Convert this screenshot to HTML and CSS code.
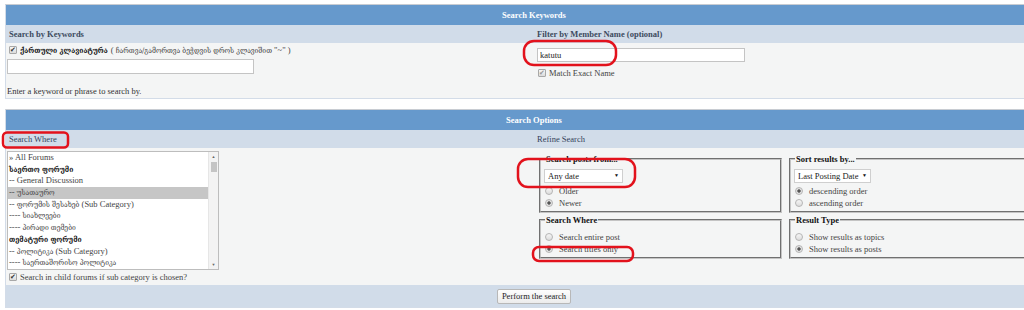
FILE: index.html
```html
<!DOCTYPE html>
<html lang="ka">
<head>
  <meta charset="UTF-8">
  <meta name="viewport" content="width=device-width, initial-scale=1.0">
  <title>Search</title>
  <link rel="stylesheet" href="styles.css">
</head>
<body>
  <div class="shot">
    <div class="page">

      <form class="panel">
        <div class="panel-head">Search Keywords</div>
        <div class="cols sub">
          <div class="cell">Search by Keywords</div>
          <div class="cell">Filter by Member Name (optional)</div>
        </div>
        <div class="cols body-top">
          <div class="cell cell-keywords">
            <label class="check-line kb-line">
              <input type="checkbox" checked>
              <b class="ka">ქართული კლავიატურა</b>
              <span class="kb-note">( <span class="ka">ჩართვა/გამორთვა ბეჭდვის დროს კლავიშით</span> "~" )</span>
            </label>
            <input type="text" class="text-input keywords">
            <div class="hint">Enter a keyword or phrase to search by.</div>
          </div>
          <div class="cell cell-member">
            <input type="text" class="text-input member" value="katutu">
            <label class="check-line exact">
              <input type="checkbox" checked disabled>
              Match Exact Name
            </label>
          </div>
        </div>
      </form>

      <form class="panel panel-options">
        <div class="panel-head">Search Options</div>
        <div class="cols sub sub-light">
          <div class="cell">Search Where</div>
          <div class="cell">Refine Search</div>
        </div>
        <div class="cols body-options">
          <div class="cell cell-forums">
            <div class="listbox">
              <ul class="forum-list">
                <li>» All Forums</li>
                <li class="cat"><span class="ka">საერთო ფორუმი</span></li>
                <li>-- General Discussion</li>
                <li class="selected">-- <span class="ka">უსათაურო</span></li>
                <li>-- <span class="ka">ფორუმის შესახებ</span> (Sub Category)</li>
                <li>---- <span class="ka">სიახლეები</span></li>
                <li>---- <span class="ka">პირადი თემები</span></li>
                <li class="cat"><span class="ka">თემატური ფორუმი</span></li>
                <li>-- <span class="ka">პოლიტიკა</span> (Sub Category)</li>
                <li>---- <span class="ka">საერთაშორისო პოლიტიკა</span></li>
              </ul>
              <div class="scrollbar">
                <span class="arrow">▲</span>
                <span class="thumb"></span>
                <span class="track"></span>
                <span class="arrow">▼</span>
              </div>
            </div>
            <label class="check-line child">
              <input type="checkbox" checked>
              Search in child forums if sub category is chosen?
            </label>
          </div>

          <div class="cell cell-refine">
            <div class="refine-grid">
              <fieldset>
                <legend>Search posts from...</legend>
                <span class="select select-date">
                  <select>
                    <option>Any date</option>
                  </select>
                </span>
                <label class="radio-line"><input type="radio" name="age">Older</label>
                <label class="radio-line"><input type="radio" name="age" checked>Newer</label>
              </fieldset>
              <fieldset>
                <legend>Sort results by...</legend>
                <span class="select select-sort">
                  <select>
                    <option>Last Posting Date</option>
                  </select>
                </span>
                <label class="radio-line"><input type="radio" name="order" checked>descending order</label>
                <label class="radio-line"><input type="radio" name="order">ascending order</label>
              </fieldset>
              <fieldset class="fs-low">
                <legend>Search Where</legend>
                <label class="radio-line"><input type="radio" name="where">Search entire post</label>
                <label class="radio-line"><input type="radio" name="where" checked>Search titles only</label>
              </fieldset>
              <fieldset class="fs-low">
                <legend>Result Type</legend>
                <label class="radio-line"><input type="radio" name="type">Show results as topics</label>
                <label class="radio-line"><input type="radio" name="type" checked>Show results as posts</label>
              </fieldset>
            </div>
          </div>
        </div>
        <div class="panel-foot">
          <button type="submit">Perform the search</button>
        </div>
      </form>

    </div>

    <!-- red marker circles drawn over the screenshot -->
    <svg class="marks" width="1024" height="310" viewBox="0 0 1024 310">
      <rect x="524" y="41" width="92" height="24" rx="10"/>
      <rect x="3" y="132.5" width="65" height="15" rx="4"/>
      <rect x="518" y="159" width="117" height="28" rx="10"/>
      <rect x="533" y="247" width="100" height="14" rx="6"/>
    </svg>
  </div>
</body>
</html>
```

FILE: styles.css
```css
body {
  margin: 0;
  overflow: hidden;
  background: #fff;
  font-family: "Liberation Serif", "DejaVu Serif", serif;
  font-size: 8.5px;
  color: #333;
}
.shot {
  position: relative;
  width: 1024px;
  height: 310px;
  overflow: hidden;
}
.page {
  width: 1058px;
  margin-left: 5px;
  padding-top: 4px;
}
.ka {
  font-family: "DejaVu Serif Condensed", "DejaVu Sans Condensed", "DejaVu Serif", serif;
  font-size: 7.5px;
}
.panel {
  margin: 0;
  border: 1px solid #d3dce8;
  border-top-color: #c8ccd2;
  background: #f4f5f5;
}
.panel-options {
  margin-top: 10px;
}
.panel-head {
  height: 20px;
  line-height: 20px;
  background: #6699cc;
  color: #fff;
  font-weight: bold;
  text-align: center;
}
.cols {
  display: grid;
  grid-template-columns: 527px 1fr;
}
.sub {
  height: 18px;
  line-height: 18px;
  background: #d1dce9;
  color: #3d4b5e;
  font-weight: bold;
}
.sub .cell:first-child {
  padding-left: 3px;
}
.sub .cell:last-child {
  padding-left: 4px;
}
.sub-light {
  font-weight: normal;
  color: #34425a;
}

/* keyword row */
.body-top {
  height: 55px;
}
.cell-keywords {
  padding: 2px 0 0 1px;
}
.check-line {
  display: flex;
  align-items: center;
  gap: 3px;
  height: 10px;
  white-space: nowrap;
}
.kb-line {
  padding-left: 2px;
}
.kb-line b {
  color: #111;
}
.kb-note {
  color: #444;
}
.text-input {
  display: block;
  box-sizing: border-box;
  height: 15px;
  padding: 0 2px;
  border: 1px solid #c4c4c4;
  background: #fff;
  font: inherit;
  color: #222;
}
.keywords {
  width: 247px;
  margin-top: 4px;
}
.hint {
  margin-top: 12px;
  line-height: 10px;
}
.cell-member {
  padding: 5px 0 0 4px;
}
.member {
  width: 208px;
  height: 14px;
}
.exact {
  margin-top: 6px;
  padding-left: 1px;
  color: #444;
}

/* checkbox and radio look */
input[type="checkbox"],
input[type="radio"] {
  appearance: none;
  -webkit-appearance: none;
  box-sizing: border-box;
  width: 8px;
  height: 8px;
  margin: 0;
  flex: none;
  border: 1px solid #a8a8a8;
  background: linear-gradient(#f6f6f6, #dcdcdc);
  position: relative;
}
input[type="checkbox"] {
  border-radius: 1px;
}
input[type="checkbox"]:checked::before {
  content: "✔";
  position: absolute;
  left: 0;
  top: -2px;
  font-size: 7px;
  line-height: 10px;
  color: #333;
}
input[type="checkbox"]:disabled:checked::before {
  color: #999;
}
input[type="radio"] {
  border-radius: 50%;
  border-color: #b5b5b5;
}
input[type="radio"]:checked {
  background: radial-gradient(circle, #555 0 1.4px, #e2e2e2 1.9px);
}

/* forum list */
.body-options {
  height: 137px;
}
.cell-forums {
  padding: 3px 0 0 1px;
}
.listbox {
  display: flex;
  box-sizing: border-box;
  width: 212px;
  height: 119px;
  border: 1px solid #bdbdbd;
  background: #fff;
}
.forum-list {
  flex: 1;
  list-style: none;
  margin: 0;
  padding: 0;
  overflow: hidden;
}
.forum-list li {
  height: 11.7px;
  line-height: 11.7px;
  padding-left: 1px;
  white-space: nowrap;
  color: #444;
}
.forum-list .cat {
  font-weight: bold;
  color: #111;
}
.forum-list .selected {
  background: #c6c6c6;
}
.scrollbar {
  display: flex;
  flex-direction: column;
  align-items: center;
  width: 9px;
  background: #f3f3f3;
  border-left: 1px solid #e6e6e6;
}
.scrollbar .arrow {
  height: 9px;
  line-height: 9px;
  font-size: 4px;
  color: #666;
}
.scrollbar .thumb {
  width: 6px;
  height: 10px;
  margin-top: 1px;
  background: #c4c4c4;
}
.scrollbar .track {
  flex: 1;
}
.child {
  margin-top: 2px;
  padding-left: 2px;
  color: #444;
}

/* refine search */
.cell-refine {
  padding: 6px 0 0 6px;
}
.refine-grid {
  display: grid;
  grid-template-columns: 243px 243px;
  column-gap: 7px;
  row-gap: 2px;
}
fieldset {
  min-width: 0;
  margin: 0;
  padding: 0 3px 2px 3px;
  border: 2px groove #c4c4c4;
}
legend {
  padding: 0 1px;
  margin-left: 1px;
  line-height: 10px;
  font-weight: bold;
  color: #111;
}
.select {
  position: relative;
  display: inline-block;
  margin-top: 5px;
  margin-bottom: 2px;
}
.select select {
  appearance: none;
  -webkit-appearance: none;
  display: block;
  box-sizing: border-box;
  height: 14px;
  padding: 0 3px;
  border: 1px solid #cfcfcf;
  border-radius: 0;
  background: #fff;
  font: inherit;
  color: #222;
}
.select::after {
  content: "▼";
  position: absolute;
  right: 4px;
  top: 0;
  line-height: 14px;
  font-size: 5px;
  color: #111;
}
.select-date select {
  width: 79px;
}
.select-sort select {
  width: 77px;
}
.radio-line {
  display: flex;
  align-items: center;
  gap: 6px;
  height: 12px;
  padding-left: 1px;
  white-space: nowrap;
  color: #444;
}
.fs-low {
  padding-top: 6px;
}

/* footer */
.panel-foot {
  display: flex;
  align-items: center;
  justify-content: center;
  height: 22px;
  background: #d1dce9;
}
.panel-foot button {
  height: 15px;
  padding: 0 4px;
  border: 1px solid #b8b8b8;
  border-radius: 2px;
  background: linear-gradient(#fdfdfd, #ececec);
  font: inherit;
  color: #222;
}

.marks {
  position: absolute;
  left: 0;
  top: 0;
  pointer-events: none;
}
.marks rect {
  fill: none;
  stroke: #e2121c;
  stroke-width: 2.5;
}
```
